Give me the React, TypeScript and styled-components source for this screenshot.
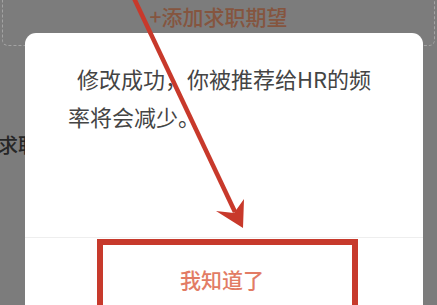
import React from "react";
import styled, { createGlobalStyle } from "styled-components";

const GlobalStyle = createGlobalStyle`
  html, body {
    margin: 0;
    padding: 0;
    background: #7c7c7c;
  }
  * {
    box-sizing: border-box;
  }
`;

const App = () => {
  return (
    <Page>
      <GlobalStyle />
      <AddCard>+添加求职期望</AddCard>
      <SectionTitle>求职</SectionTitle>

      <Dialog>
        <Message>修改成功，你被推荐给HR的频率将会减少。</Message>
        <Footer>
          <ConfirmButton>我知道了</ConfirmButton>
        </Footer>
      </Dialog>

      <HighlightBox />
      <Arrow width="437" height="305" viewBox="0 0 437 305">
        <line
          x1="132"
          y1="-6"
          x2="235"
          y2="212"
          stroke="#c8392b"
          strokeWidth="4.5"
        />
        <polygon points="216,211 234,213 244,199 243,228" fill="#c8392b" />
      </Arrow>
    </Page>
  );
};

export default App;

const Page = styled.div`
  position: relative;
  width: 437px;
  height: 305px;
  overflow: hidden;
  background: #7c7c7c;
  font-family: "Noto Sans CJK SC", "Noto Sans", sans-serif;
`;

const AddCard = styled.div`
  margin: -20px 2px 0;
  height: 66px;
  padding-top: 23px;
  border: 1px dashed #a3a3a3;
  border-radius: 6px;
  text-align: center;
  font-size: 21px;
  line-height: 24px;
  font-weight: 500;
  color: #85553f;
`;

const SectionTitle = styled.div`
  margin: 87px 0 0 -2px;
  font-size: 20px;
  line-height: 24px;
  color: #262626;
  font-weight: 500;
`;

const Dialog = styled.div`
  position: absolute;
  left: 25px;
  top: 33px;
  width: 398px;
  height: 300px;
  background: #ffffff;
  border-radius: 11px;
  display: flex;
  flex-direction: column;
`;

const Message = styled.div`
  height: 204px;
  padding: 26px 42px 0 43px;
  text-indent: 9px;
  font-size: 22px;
  line-height: 38px;
  color: #444444;
`;

const Footer = styled.div`
  border-top: 1px solid #eeeeee;
  display: flex;
  justify-content: center;
  padding-top: 26px;
`;

const ConfirmButton = styled.div`
  font-size: 21px;
  line-height: 30px;
  font-weight: 500;
  color: #e27c65;
  margin-left: -4px;
`;

const HighlightBox = styled.div`
  position: absolute;
  left: 97px;
  top: 239px;
  width: 261px;
  height: 90px;
  border: 6px solid #c73a2c;
`;

const Arrow = styled.svg`
  position: absolute;
  left: 0;
  top: 0;
`;
